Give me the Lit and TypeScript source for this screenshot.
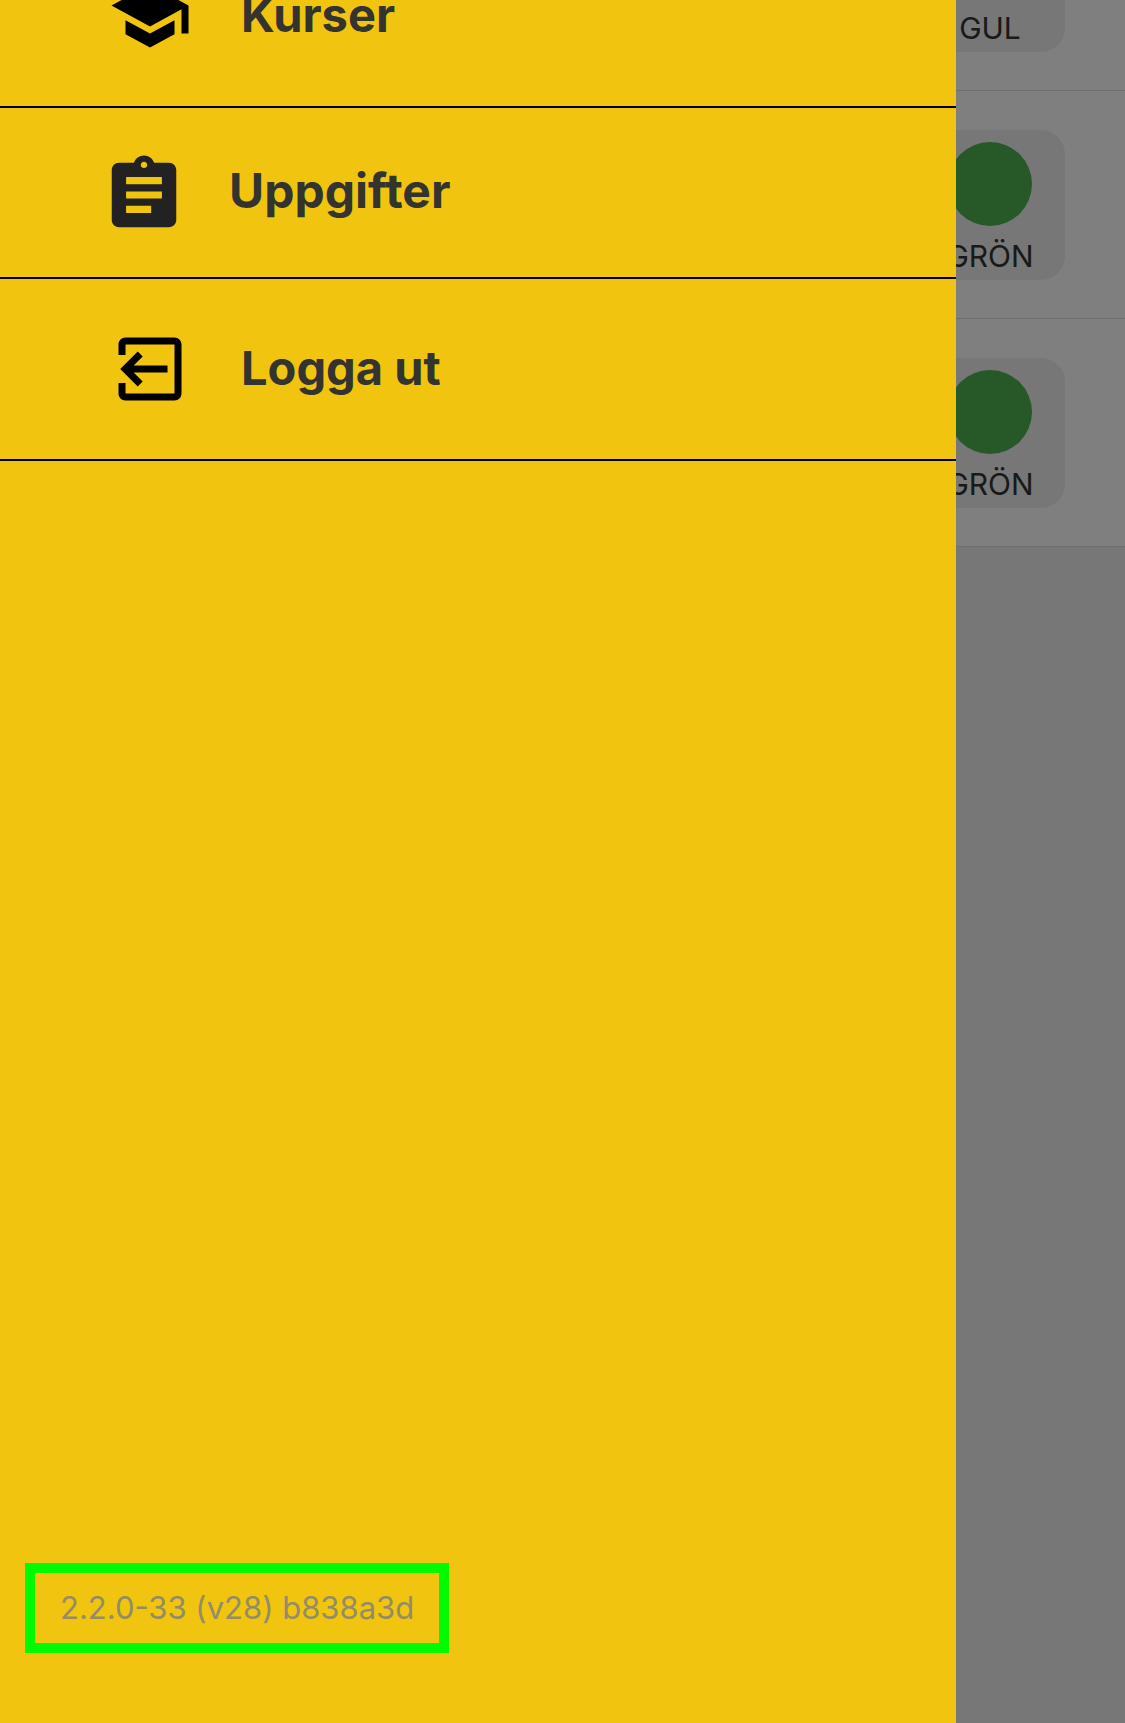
import { LitElement, html, css, svg } from "lit";
import { customElement } from "lit/decorators.js";

interface Status {
  label: string;
  tone: "yellow" | "green";
}

interface MenuItem {
  label: string;
  variant: "large" | "compact";
  icon: unknown;
}

const STATUSES: Status[] = [
  { label: "GUL", tone: "yellow" },
  { label: "GRÖN", tone: "green" },
  { label: "GRÖN", tone: "green" },
];

const MENU: MenuItem[] = [
  {
    label: "Kurser",
    variant: "large",
    icon: svg`<path d="M5 13.18v4L12 21l7-3.82v-4L12 17l-7-3.82zM12 3L1 9l11 6 9-4.91V17h2V9L12 3z"/>`,
  },
  {
    label: "Uppgifter",
    variant: "compact",
    icon: svg`<path d="M19 3h-4.18C14.4 1.84 13.3 1 12 1c-1.3 0-2.4.84-2.82 2H5c-1.1 0-2 .9-2 2v14c0 1.1.9 2 2 2h14c1.1 0 2-.9 2-2V5c0-1.1-.9-2-2-2zm-7-.25c.5 0 .9.4.9.85s-.4.85-.9.85-.9-.4-.9-.85.4-.85.9-.85zM14 17H7v-2h7v2zm3-4H7v-2h10v2zm0-4H7V7h10v2z"/>`,
  },
  {
    label: "Logga ut",
    variant: "large",
    icon: svg`<path d="M9.91 8.41 8.5 7l-5 5 5 5 1.41-1.41L7.33 13H17v-2H7.33zM5 3h14c1.1 0 2 .9 2 2v14c0 1.1-.9 2-2 2H5c-1.1 0-2-.9-2-2v-3h2v3h14V5H5v3H3V5c0-1.1.9-2 2-2z"/>`,
  },
];

@customElement("status-list")
export class StatusList extends LitElement {
  static styles = css`
    :host {
      display: block;
      color: #333;
      font-size: 30px;
      line-height: 36px;
    }
    .list {
      list-style: none;
      margin: -137px 0 0;
      padding: 0;
    }
    .row {
      display: flex;
      justify-content: flex-end;
      padding: 39px 60px 38px;
      background: #fff;
      border-bottom: 1px solid #dcdcdc;
    }
    .card {
      box-sizing: border-box;
      display: flex;
      flex-direction: column;
      align-items: center;
      gap: 12px;
      min-width: 150px;
      padding: 12px 12px 6px;
      border: 0;
      border-radius: 24px;
      background: #eee;
      color: inherit;
      font: inherit;
    }
    .dot {
      width: 84px;
      height: 84px;
      border-radius: 50%;
    }
    .yellow {
      background: #f1c40f;
    }
    .green {
      background: #4cb050;
    }
  `;

  render() {
    return html`<ul class="list">
      ${STATUSES.map(
        (s) => html`<li class="row">
          <button class="card" type="button">
            <span class="dot ${s.tone}"></span>
            <span>${s.label}</span>
          </button>
        </li>`
      )}
    </ul>`;
  }
}

@customElement("side-menu")
export class SideMenu extends LitElement {
  static styles = css`
    :host {
      display: flex;
      flex-direction: column;
      overflow: hidden;
      background: #f1c40f;
    }
    .items {
      list-style: none;
      margin: -74px 0 0;
      padding: 0;
    }
    .item {
      border-bottom: 2px solid #000;
    }
    .link {
      display: flex;
      align-items: center;
      color: #333330;
      font-weight: 700;
      line-height: 60px;
      text-decoration: none;
    }
    .large {
      gap: 49px;
      padding: 48px 108px;
      font-size: 47px;
    }
    .compact {
      gap: 42px;
      padding: 44px 101px 39px;
      font-size: 48px;
    }
    .large .label {
      padding-bottom: 2px;
    }
    .compact .label {
      padding-bottom: 8px;
    }
    .icon {
      flex: none;
      width: 84px;
      height: 84px;
      fill: #000;
    }
    .compact .icon {
      width: 86px;
      height: 86px;
      fill: #222;
    }
    .version {
      align-self: flex-start;
      margin: auto 0 70px 25px;
      padding: 17px 25px;
      border: 10px solid #00fa00;
      color: #938c66;
      font-size: 31px;
      line-height: 36px;
    }
  `;

  render() {
    return html`<nav>
        <ul class="items">
          ${MENU.map(
            (m) => html`<li class="item">
              <a class="link ${m.variant}" href="#">
                <svg class="icon" viewBox="0 0 24 24" aria-hidden="true">${m.icon}</svg>
                <span class="label">${m.label}</span>
              </a>
            </li>`
          )}
        </ul>
      </nav>
      <div class="version">2.2.0-33 (v28) b838a3d</div>`;
  }
}

@customElement("app-root")
export class AppRoot extends LitElement {
  static styles = css`
    :host {
      display: block;
      position: relative;
      min-height: 100vh;
      overflow: hidden;
      background: #efefef;
      font-family: Inter, "Liberation Sans", sans-serif;
    }
    .scrim {
      position: absolute;
      inset: 0;
      background: rgba(0, 0, 0, 0.5);
    }
    .drawer {
      position: absolute;
      inset: 0 15% 0 0;
    }
  `;

  render() {
    return html`
      <status-list></status-list>
      <div class="scrim"></div>
      <side-menu class="drawer"></side-menu>
    `;
  }
}
